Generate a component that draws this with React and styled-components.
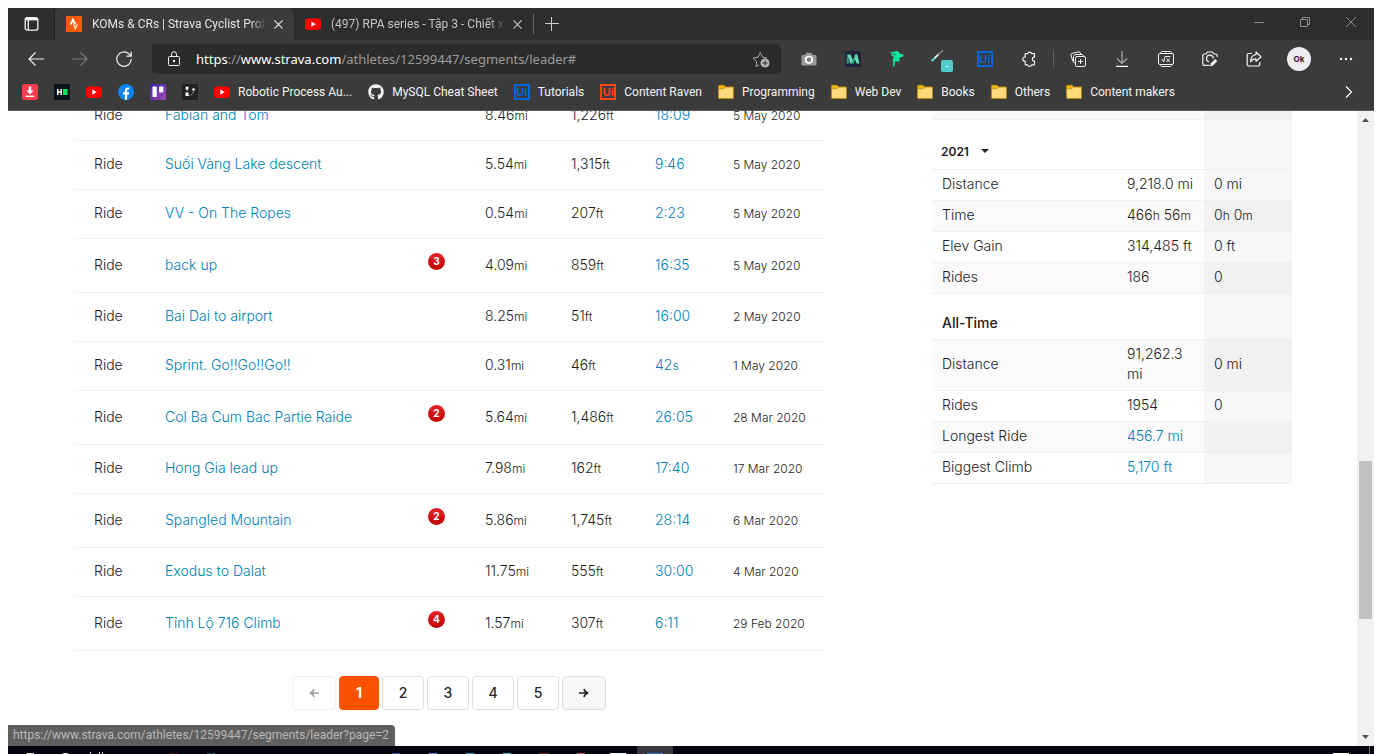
import React from "react";
import styled, { createGlobalStyle, css } from "styled-components";
import { FaGithub } from "react-icons/fa";

const GlobalStyle = createGlobalStyle`
  *, *::before, *::after { box-sizing: border-box; }
  body {
    margin: 8px 8px 0;
    background: #fff;
    font-family: Inter, "Noto Sans", sans-serif;
    overflow: hidden;
  }
  button { font: inherit; color: inherit; border: 0; padding: 0; background: none; cursor: pointer; }
  a { text-decoration: none; }
  svg { display: block; flex: none; }
`;

const chromeFont = css`
  font-family: Roboto, "Noto Sans", sans-serif;
  font-size: 12px;
`;

const Desktop = styled.div`
  display: flex;
  flex-direction: column;
  height: calc(100vh - 8px);
`;

/* ---------- title bar ---------- */

const TitleBar = styled.header`
  ${chromeFont}
  display: flex;
  align-items: stretch;
  flex: none;
  height: 32px;
  background: #2d2d2d;
  color: #d0d0d0;
`;

const TabActions = styled.button`
  display: flex;
  align-items: center;
  justify-content: center;
  width: 47px;
  border-right: 1px solid #222;
  color: #f2f2f2;
`;

const Tab = styled.div`
  display: flex;
  align-items: center;
  gap: 10px;
  width: 239px;
  padding: 0 8px 0 11px;
  border-radius: 5px 5px 0 0;
  background: ${(p) => (p.$active ? "#3b3b3b" : "transparent")};
  color: ${(p) => (p.$active ? "#e4e4e4" : "#c4c4c4")};
`;

const TabTitle = styled.span`
  flex: 1;
  min-width: 0;
  overflow: hidden;
  white-space: nowrap;
  mask-image: linear-gradient(to right, #000 calc(100% - 16px), transparent);
`;

const TabClose = styled.button`
  display: flex;
  align-items: center;
  justify-content: center;
  width: 16px;
  height: 16px;
  margin-left: -6px;
`;

const TabDivider = styled.span`
  align-self: center;
  width: 1px;
  height: 20px;
  background: #6a6a6a;
`;

const NewTab = styled.button`
  display: flex;
  align-items: center;
  justify-content: center;
  width: 36px;
`;

const WindowControls = styled.div`
  display: flex;
  align-items: stretch;
  margin-left: auto;
  padding-bottom: 4px;
  color: #8c8c8c;
`;

const WindowButton = styled.button`
  display: flex;
  align-items: center;
  justify-content: center;
  width: 46px;
`;

/* ---------- toolbar ---------- */

const Toolbar = styled.div`
  ${chromeFont}
  display: flex;
  align-items: center;
  flex: none;
  height: 38px;
  padding: 0 4px 0 6px;
  background: #3b3b3b;
  color: #f2f2f2;
`;

const ToolButton = styled.button`
  display: flex;
  align-items: center;
  justify-content: center;
  flex: none;
  width: ${(p) => p.$width || 44}px;
  height: 30px;
  color: ${(p) => (p.$dim ? "#7d7d7d" : "inherit")};
`;

const AddressBar = styled.div`
  display: flex;
  align-items: center;
  flex: 1;
  min-width: 0;
  height: 30px;
  margin: 0 6px;
  padding: 0 10px 0 14px;
  border-radius: 4px;
  background: #2b2b2b;
`;

const Url = styled.span`
  flex: 1;
  min-width: 0;
  overflow: hidden;
  margin-left: 14px;
  white-space: nowrap;
  font-family: "Noto Sans", sans-serif;
  font-size: 13px;
  line-height: 20px;
  color: #9b9b9b;
  b { font-weight: 400; color: #fff; }
`;

const ToolDivider = styled.span`
  width: 1px;
  height: 18px;
  margin: 0 2px;
  background: #5c5c5c;
`;

const Avatar = styled.span`
  display: flex;
  align-items: center;
  justify-content: center;
  width: 24px;
  height: 24px;
  border-radius: 50%;
  background: #f0eef3;
  color: #222;
  font: 700 8px Inter, sans-serif;
`;

/* ---------- bookmarks ---------- */

const Bookmarks = styled.nav`
  ${chromeFont}
  display: flex;
  align-items: center;
  gap: 16px;
  flex: none;
  height: 33px;
  padding: 0 20px 5px 14px;
  border-bottom: 1px solid #5c5a5c;
  background: #3b3b3b;
  color: #f4f4f4;
`;

const Bookmark = styled.a`
  display: flex;
  align-items: center;
  gap: 8px;
  height: 16px;
  color: inherit;
  white-space: nowrap;
`;

const MoreBookmarks = styled.button`
  margin-left: auto;
`;

/* ---------- page ---------- */

const Viewport = styled.div`
  position: relative;
  display: flex;
  flex: 1;
  min-height: 0;
  overflow: hidden;
  color: #1c1c20;
  font-size: 14px;
  font-weight: 300;
`;

/* The page is scrolled part of the way down, so its first row is cut. */
const Page = styled.main`
  display: flex;
  justify-content: space-between;
  align-items: flex-start;
  flex: 1;
  min-width: 0;
  margin-top: -20px;
  padding: 0 65px 0 66px;
`;

const Results = styled.section`
  flex: 0 1 750px;
  min-width: 0;
`;

const SegmentTable = styled.table`
  width: 100%;
  border-collapse: collapse;
  table-layout: fixed;
`;

const SegmentRow = styled.tr`
  height: ${(p) => (p.$ranked ? 54 : 49)}px;
  border-bottom: 1px solid #f0f0f5;
`;

const Cell = styled.td`
  padding: 0 0 1px ${(p) => (p.$first ? 20 : 0)}px;
  line-height: 20px;
  white-space: nowrap;
  vertical-align: middle;
`;

const DateCell = styled(Cell)`
  padding-top: 2px;
  font-size: 12px;
`;

const Unit = styled.small`
  font-size: 12px;
  line-height: 1;
`;

const Link = styled.a`
  color: #007fb6;
`;

const Rank = styled.span`
  display: flex;
  align-items: center;
  justify-content: center;
  width: 17px;
  height: 17px;
  margin-bottom: 7px;
  border-radius: 50%;
  background: linear-gradient(#e8262b, #bd0000);
  color: #fff;
  font-size: 10px;
  font-weight: 700;
  line-height: 16px;
`;

const Pagination = styled.nav`
  display: flex;
  justify-content: center;
  gap: 3px;
  margin-top: 25px;
`;

const PageButton = styled.button`
  display: flex;
  align-items: center;
  justify-content: center;
  width: ${(p) => (p.$arrow ? 44 : p.$current ? 40 : 42)}px;
  height: 34px;
  border: 1px solid ${(p) => (p.$current ? "#fc5200" : "#dfdfe8")};
  border-radius: 4px;
  background: ${(p) => (p.$current ? "#fc5200" : p.$hover ? "#f7f7fa" : "#fff")};
  color: ${(p) => (p.$current ? "#fff" : "#242428")};
  font-weight: ${(p) => (p.$current ? 700 : 500)};
  &:disabled { border-color: #f0f0f5; color: #9c9c9f; cursor: default; }
`;

const Stats = styled.aside`
  flex: 0 0 360px;
`;

const StatTable = styled.table`
  width: 100%;
  border-collapse: collapse;
  table-layout: fixed;
`;

const StatRow = styled.tr`
  height: ${(p) => p.$height || 31}px;
  border-bottom: 1px solid #efeff1;
  background: ${(p) => (p.$striped ? "#fafafa" : "#fff")};
  & > :last-child { background: ${(p) => (p.$striped ? "#f1f1f1" : "#f7f7f7")}; }
`;

const StatCell = styled.td`
  padding: 4px 0 6px 10px;
  line-height: 20px;
  text-align: left;
  font-weight: 300;
`;

const YearCell = styled.th`
  padding: 14px 0 0 9px;
  text-align: left;
`;

const YearButton = styled.button`
  display: flex;
  align-items: center;
  gap: 12px;
  font-size: 12px;
  font-weight: 600;
`;

const SectionCell = styled.th`
  padding: 13px 0 0 10px;
  text-align: left;
  font-weight: 500;
`;

const StatusBubble = styled.div`
  ${chromeFont}
  position: absolute;
  left: 0;
  bottom: 0;
  height: 21px;
  padding: 0 6px 0 5px;
  border-top-right-radius: 4px;
  background: #5f5f5f;
  color: #b8b8b8;
  font-weight: 400;
  line-height: 21px;
`;

const ScrollTrack = styled.div`
  display: flex;
  flex-direction: column;
  align-items: center;
  flex: none;
  width: 17px;
  padding: 7px 0;
  background: #f1f1f1;
`;

const ScrollSpace = styled.span`
  flex: ${(p) => p.$grow};
`;

const ScrollThumb = styled.span`
  width: 13px;
  height: 158px;
  background: #c1c1c1;
`;

/* ---------- task bar ---------- */

const TaskBar = styled.footer`
  display: flex;
  gap: 1px;
  flex: none;
  height: 8px;
  overflow: hidden;
  background: #02020e;
`;

const TaskLead = styled.div`
  width: 147px;
  padding-left: 18px;
`;

const TaskItem = styled.span`
  display: flex;
  justify-content: center;
  width: 36px;
  height: 8px;
  padding-top: 7px;
  background: ${(p) => (p.$active ? "#38363f" : "transparent")};
`;

const TaskTray = styled.div`
  display: flex;
  gap: 20px;
  margin-left: auto;
  padding-right: 4px;
`;

/* ---------- drawings ---------- */

const Line = ({ size = 16, box = 16, w = 1, children, ...rest }) => (
  <svg width={size} height={size} viewBox={`0 0 ${box} ${box}`} fill="none" stroke="currentColor" strokeWidth={w} aria-hidden="true" {...rest}>
    {children}
  </svg>
);

const YouTube = () => (
  <svg width="16" height="16" viewBox="0 0 16 16" aria-hidden="true">
    <rect x="0" y="2.5" width="16" height="11.5" rx="3" fill="#f00" />
    <path d="M6.3 5.6v5.2l4.5-2.6z" fill="#fff" />
  </svg>
);

const Strava = () => (
  <svg width="16" height="16" viewBox="0 0 16 16" aria-hidden="true">
    <rect width="16" height="16" fill="#fc5a0a" />
    <path d="M7 1.7 3.6 8.6h2L7 5.9l1.4 2.7h2z" fill="#fff" />
    <path d="M8.4 8.6 9.4 10.6l1-2h1.8L9.4 14.2 6.7 8.6z" fill="#ffd3bd" />
  </svg>
);

const UiFrame = styled.span`
  display: flex;
  align-items: center;
  justify-content: center;
  width: 16px;
  height: 16px;
  border: 2px solid ${(p) => p.$color};
  color: ${(p) => p.$color};
  font: 700 11px/12px "Liberation Sans", sans-serif;
`;
const UiLogo = ({ color }) => <UiFrame $color={color}>Ui</UiFrame>;

const Folder = () => (
  <svg width="16" height="16" viewBox="0 0 16 16" aria-hidden="true">
    <path d="M.5 2A.8.8 0 0 1 1.3 1.3H6L7.5 3H15a.6.6 0 0 1 .6.6v10.2a.8.8 0 0 1-.8.8H1.3a.8.8 0 0 1-.8-.8z" fill="#ffd97a" stroke="#b8860b" />
    <path d="M1 1.8h4.8L7 3.2 5.8 4.5H1z" fill="#f0b400" />
    <path d="M.8 4.7h5.2l1.5-1.6" fill="none" stroke="#b8860b" strokeWidth=".8" />
  </svg>
);

const Downloader = () => (
  <svg width="16" height="16" viewBox="0 0 16 16" aria-hidden="true">
    <rect width="16" height="16" rx="2.5" fill="#fb3d4e" />
    <path d="M6.8 2.5h2.4v4h2.5L8 10.4 4.3 6.5h2.5z" fill="#fff" />
    <path d="M3.8 12.3h8.4" stroke="#fff" strokeWidth="1.4" />
  </svg>
);

const HackerRank = () => (
  <svg width="16" height="16" viewBox="0 0 16 16" aria-hidden="true">
    <rect width="16" height="16" fill="#0a141c" />
    <path d="M3.8 5v6M7.2 5v6M3.8 8h3.4" stroke="#fff" strokeWidth="1.5" />
    <rect x="9" y="5" width="4.5" height="6" fill="#00e35b" />
  </svg>
);

const Facebook = () => (
  <svg width="16" height="16" viewBox="0 0 16 16" aria-hidden="true">
    <circle cx="8" cy="8" r="8" fill="#0c86f5" />
    <path d="M6.9 15.8v-5.4H5V8.2h1.9V6.5c0-2 1.1-3 2.9-3 .8 0 1.5.1 1.5.1v1.9h-1c-.9 0-1.2.6-1.2 1.1v1.6h2.1l-.4 2.2H9.1v5.4a8 8 0 0 1-2.2 0z" fill="#fff" />
  </svg>
);

const Trello = () => (
  <svg width="16" height="16" viewBox="0 0 16 16" aria-hidden="true">
    <defs>
      <linearGradient id="board" x1="0" y1="0" x2="1" y2="1">
        <stop offset="0" stopColor="#3c22a8" />
        <stop offset="1" stopColor="#9d4bb0" />
      </linearGradient>
    </defs>
    <rect width="16" height="16" rx="1" fill="url(#board)" />
    <rect x="2.5" y="2.5" width="4.3" height="10.5" rx=".8" fill="#fff" />
    <rect x="9" y="2.5" width="4.3" height="6" rx=".8" fill="#fff" />
  </svg>
);

const Branches = () => (
  <svg width="16" height="16" viewBox="0 0 16 16" aria-hidden="true">
    <rect width="16" height="16" rx="1" fill="#212121" />
    <path d="M5 5v6M5.5 11.5c4 0 6-1.500 6-5" stroke="#aaa" strokeWidth="1" fill="none" strokeDasharray="2 1" />
    <rect x="3.700" y="2.700" width="2.800" height="2.800" fill="#fff" />
    <rect x="3.500" y="8.500" width="3" height="3.500" fill="#fff" />
    <circle cx="11.500" cy="5.500" r="1.300" fill="#fff" />
  </svg>
);

const Extensions = {
  camera: (
    <svg width="16" height="16" viewBox="0 0 16 16" aria-hidden="true">
      <path d="M1.500 4H4l1.500-2.200h5L12 4h2.500a1 1 0 0 1 1 1v8.500a1 1 0 0 1-1 1h-13a1 1 0 0 1-1-1V5a1 1 0 0 1 1-1z" fill="#9a9a9a" />
      <circle cx="8" cy="8.700" r="3.200" fill="#808080" stroke="#fff" strokeWidth="1.700" />
    </svg>
  ),
  mark: (
    <svg width="16" height="16" viewBox="0 0 16 16" aria-hidden="true">
      <rect width="16" height="16" fill="#20243a" />
      <path d="M2 3.500h3.500l2.500 6-1 3H5.500z" fill="#62dcb0" />
      <path d="M8 9.500 9.500 3.500h1.800L8.800 12.500H6.500z" fill="#2f9f83" />
      <path d="M10.500 3.500h1.800l2.200 9h-3L9.800 8z" fill="#62dcb0" />
      <path d="M2 3.500 4.500 12.500H1.500z" fill="#2f9f83" />
    </svg>
  ),
  bird: (
    <svg width="16" height="16" viewBox="0 0 16 16" aria-hidden="true">
      <path d="M1 1.800 4.500.8 8 0l2.500 1.500.7 1.500 3.300.2-.5 2.600-3 .6-.7 1.200.4 2.500-1.800.6-2.400-1L6 12l-.8 3.500H3.800l.4-4L3.500 9 5 5.800 2 5l1.500-1.500z" fill="#12e3a0" />
      <path d="M3.500 2.800 7 4" stroke="#2a4a3e" strokeWidth=".7" />
    </svg>
  ),
  puzzle: (
    <Line w={1.200}>
      <path d="M4.200 2.700h2.500a2 2 0 0 1 3.900 0h2.900v3.500h-.6a2 2 0 0 0 0 3.900h.6v3.700h-2.900a2 2 0 0 1-3.900 0H4.200v-3.700a2 2 0 1 1 0-3.900z" strokeLinejoin="round" />
    </Line>
  ),
};

const PickerIcon = () => (
  <svg width="24" height="26" viewBox="0 0 24 26" aria-hidden="true">
    <path d="M2 14.500 9 7.500l1.300 1.300-6.800 6.800z" fill="#e8f4f4" />
    <path d="M2 14.500 5 11.500l1.500 1.300-3 2.800z" fill="#4cc9c9" />
    <path d="M9 8.500l5-4" stroke="#777" strokeWidth="2" />
    <rect x="12" y="14" width="12" height="12" rx="2" fill="#4fcbcb" />
    <path d="M16.500 20.500h3" stroke="#e9ffff" />
  </svg>
);

const CloseMark = ({ size = 9 }) => (
  <Line size={size} box={10} w={1.300}>
    <path d="M.5.5l9 9M9.500.5l-9 9" />
  </Line>
);

/* ---------- data ---------- */

const siteMarks = [
  ["Downloader", Downloader],
  ["HackerRank", HackerRank],
  ["YouTube", YouTube],
  ["Facebook", Facebook],
  ["Trello", Trello],
  ["Branches", Branches],
];

const namedMarks = [
  ["Robotic Process Au...", <YouTube />],
  ["MySQL Cheat Sheet", <FaGithub size={16} />],
  ["Tutorials", <UiLogo color="#0067df" />],
  ["Content Raven", <UiLogo color="#fa4616" />],
  ["Programming", <Folder />],
  ["Web Dev", <Folder />],
  ["Books", <Folder />],
  ["Others", <Folder />],
  ["Content makers", <Folder />],
];

const segments = [
  ["Fabian and Tom", 0, "8.46", "1,226", "18:09", "5 May 2020"],
  ["Suối Vàng Lake descent", 0, "5.54", "1,315", "9:46", "5 May 2020"],
  ["VV - On The Ropes", 0, "0.54", "207", "2:23", "5 May 2020"],
  ["back up", 3, "4.09", "859", "16:35", "5 May 2020"],
  ["Bai Dai to airport", 0, "8.25", "51", "16:00", "2 May 2020"],
  ["Sprint. Go!!Go!!Go!!", 0, "0.31", "46", "42s", "1 May 2020"],
  ["Col Ba Cum Bac Partie Raide", 2, "5.64", "1,486", "26:05", "28 Mar 2020"],
  ["Hong Gia lead up", 0, "7.98", "162", "17:40", "17 Mar 2020"],
  ["Spangled Mountain", 2, "5.86", "1,745", "28:14", "6 Mar 2020"],
  ["Exodus to Dalat", 0, "11.75", "555", "30:00", "4 Mar 2020"],
  ["Tỉnh Lộ 716 Climb", 4, "1.57", "307", "6:11", "29 Feb 2020"],
];

const yearStats = [
  ["Distance", "9,218.0 mi", "0 mi"],
  ["Time", <>466<Unit>h</Unit> 56<Unit>m</Unit></>, <>0<Unit>h</Unit> 0<Unit>m</Unit></>],
  ["Elev Gain", "314,485 ft", "0 ft"],
  ["Rides", "186", "0"],
];

const allTimeStats = [
  ["Distance", <>91,262.3<br />mi</>, "0 mi"],
  ["Rides", "1954", "0"],
  ["Longest Ride", <Link href="#longest">456.7 mi</Link>, ""],
  ["Biggest Climb", <Link href="#climb">5,170 ft</Link>, ""],
];

const taskTips = ["#3a1520", "#0f4654", null, null, null, null, "#1d5fb0", "#5b8fe6", "#1f9fd0", "#41c5c5", "#8a1c38", "#d0476b", "#e9f2fa", "#2a7bd6"];

const StatRows = ({ rows, offset }) =>
  rows.map(([label, mine, yours], i) => (
    <StatRow key={label} $striped={(i + offset) % 2 === 1}>
      <StatCell as="th" scope="row">{label}</StatCell>
      <StatCell>{mine}</StatCell>
      <StatCell>{yours}</StatCell>
    </StatRow>
  ));

export default function App() {
  return (
    <Desktop>
      <GlobalStyle />
      <TitleBar>
        <TabActions aria-label="Tab actions">
          <Line w={1.300}>
            <rect x="2.200" y="1.700" width="12.600" height="12.500" rx="2" />
            <path d="M5.300 4v10" />
            <path d="M2.700 3.200h11.600" strokeWidth="2.400" />
          </Line>
        </TabActions>
        <Tab $active>
          <Strava />
          <TabTitle>KOMs &amp; CRs | Strava Cyclist Profile</TabTitle>
          <TabClose aria-label="Close tab"><CloseMark /></TabClose>
        </Tab>
        <Tab>
          <YouTube />
          <TabTitle>(497) RPA series - Tập 3 - Chiết xuất</TabTitle>
          <TabClose aria-label="Close tab"><CloseMark /></TabClose>
        </Tab>
        <TabDivider />
        <NewTab aria-label="New tab">
          <Line size={14} box={14}><path d="M6.500 0v14M0 6.500h14" /></Line>
        </NewTab>
        <WindowControls>
          <WindowButton aria-label="Minimize"><Line size={10} box={10}><path d="M0 5.500h10" /></Line></WindowButton>
          <WindowButton aria-label="Restore"><Line size={10} box={10}><path d="M.5 2.500h7v7h-7zM2.500 2.500v-2h7v7h-2" /></Line></WindowButton>
          <WindowButton aria-label="Close"><Line size={10} box={10}><path d="M0 0l10 10M10 0L0 10" /></Line></WindowButton>
        </WindowControls>
      </TitleBar>

      <Toolbar>
        <ToolButton aria-label="Back"><Line w={1.200}><path d="M16 8H1M7.500 1.500 1 8l6.500 6.500" /></Line></ToolButton>
        <ToolButton aria-label="Forward" $dim><Line w={1.200}><path d="M0 8h15M8.500 1.500 15 8l-6.500 6.500" /></Line></ToolButton>
        <ToolButton aria-label="Reload"><Line w={1.200}><path d="M15.200 8A7.200 7.200 0 1 1 12.800 2.700L15 4.900M15.200.5v4.700h-4.700" /></Line></ToolButton>
        <AddressBar>
          <Line><rect x="2.500" y="5.500" width="11" height="9" rx="1" /><path d="M5.500 5V3.200a2.500 2.500 0 0 1 5 0V5" /><rect x="7.500" y="9.500" width="1" height="1" /></Line>
          <Url><b>https</b>://<b>www.strava.com</b>/athletes/12599447/segments/leader#</Url>
          <ToolButton aria-label="Add to favorites" $width={20}>
            <Line size={18} box={18} color="#a8a8a8">
              <path d="M7 15 4 16.500l.7-5L1 8l5-.8L8.300 2.500 10.600 7.200l4.400.8" />
              <circle cx="13" cy="13" r="4.500" fill="#b5b5b5" stroke="none" />
              <path d="M10.500 13h5M13 10.500v5" stroke="#2b2b2b" />
            </Line>
          </ToolButton>
        </AddressBar>
        <ToolButton aria-label="Capture">{Extensions.camera}</ToolButton>
        <ToolButton aria-label="Markdown">{Extensions.mark}</ToolButton>
        <ToolButton aria-label="Bird">{Extensions.bird}</ToolButton>
        <ToolButton aria-label="Color picker"><PickerIcon /></ToolButton>
        <ToolButton aria-label="UiPath"><UiLogo color="#0067df" /></ToolButton>
        <ToolButton aria-label="Extensions">{Extensions.puzzle}</ToolButton>
        <ToolDivider />
        <ToolButton aria-label="Collections">
          <Line>
            <path d="M4 10.500H3L.8 4l.7-1.400L9 .8l1.300.8.7 1.900" />
            <path d="M5 12.500 3.500 11V5.500L5 3.500h7.500l1.500 2" />
            <rect x="5.500" y="5.500" width="10" height="10" rx="1.500" />
            <path d="M10.500 8v5M8 10.500h5" />
          </Line>
        </ToolButton>
        <ToolButton aria-label="Downloads"><Line w={1.200}><path d="M8 0v12M3 7.500l5 5 5-5" stroke="#aaa" /><path d="M2 15.400h12" stroke="#fff" /></Line></ToolButton>
        <ToolButton aria-label="Math solver">
          <Line>
            <rect x=".5" y="2.500" width="15" height="11" rx="1.500" />
            <path d="M2.500 2.500V1.500l1-1h9l1 1v1M2.500 13.500v1l1 1h9l1-1v-1M3.500 8.500l1 .2L5.700 11 7 5.500h5.500M8.500 7.500l3.200 3.500M11.700 7.500 8.500 11" />
          </Line>
        </ToolButton>
        <ToolButton aria-label="Web capture">
          <Line w={1.200}>
            <path d="M7.500 14.400H2.300A1.500 1.500 0 0 1 .8 12.900V4.500A1.500 1.500 0 0 1 2.300 3H4l1.500-2h5L12 3h1.700a1.500 1.500 0 0 1 1.500 1.500V6M7 10.800a3.400 3.400 0 1 1 4.300-3.300" />
            <path d="M8 15.500l1-3.300 4.200-4.300 2 2-4.200 4.500z" fill="#fff" stroke="none" />
          </Line>
        </ToolButton>
        <ToolButton aria-label="Share">
          <Line w={1.200}>
            <path d="M6 2.500H3a1.800 1.800 0 0 0-1.800 1.800v8.900A1.800 1.800 0 0 0 3 15h9a1.800 1.800 0 0 0 1.800-1.800V11" />
            <path d="M10 1l5 4.800-5 4.600V7.800c-2.800 0-4.300 1-5.500 3C4.700 7 6.500 4 10 3.700z" strokeLinejoin="round" />
          </Line>
        </ToolButton>
        <ToolButton aria-label="Profile" $width={46}><Avatar>Ok</Avatar></ToolButton>
        <ToolButton aria-label="Settings and more" $width={48}>
          <svg width="14" height="4" viewBox="0 0 14 4" fill="currentColor" aria-hidden="true"><circle cx="2" cy="2" r="1.200" /><circle cx="7" cy="2" r="1.200" /><circle cx="12" cy="2" r="1.200" /></svg>
        </ToolButton>
      </Toolbar>

      <Bookmarks aria-label="Favorites">
        {siteMarks.map(([name, Icon]) => (
          <Bookmark key={name} href="#" aria-label={name}><Icon /></Bookmark>
        ))}
        {namedMarks.map(([name, icon]) => (
          <Bookmark key={name} href="#">{icon}{name}</Bookmark>
        ))}
        <MoreBookmarks aria-label="More favorites">
          <Line size={12} box={12} w={1.300}><path d="M4 .5 9.500 6 4 11.500" /></Line>
        </MoreBookmarks>
      </Bookmarks>

      <Viewport>
        <Page>
          <Results>
            <SegmentTable aria-label="Segments">
              <colgroup>
                <col width="91" />
                <col />
                <col width="57" />
                <col width="86" />
                <col width="84" />
                <col width="78" />
                <col width="91" />
              </colgroup>
              <tbody>
                {segments.map(([name, rank, miles, feet, time, date]) => (
                  <SegmentRow key={name} $ranked={rank > 0}>
                    <Cell $first>Ride</Cell>
                    <Cell><Link href="#segment">{name}</Link></Cell>
                    <Cell>{rank > 0 && <Rank>{rank}</Rank>}</Cell>
                    <Cell>{miles}<Unit>mi</Unit></Cell>
                    <Cell>{feet}<Unit>ft</Unit></Cell>
                    <Cell>
                      <Link href="#effort">
                        {time.endsWith("s") ? <>{time.slice(0, -1)}<Unit>s</Unit></> : time}
                      </Link>
                    </Cell>
                    <DateCell>{date}</DateCell>
                  </SegmentRow>
                ))}
              </tbody>
            </SegmentTable>
            <Pagination aria-label="Pages">
              <PageButton $arrow disabled aria-label="Previous page">
                <Line size={10} box={10} w={1.400}><path d="M10 5H1.500M5 1C4.500 3 3 4.500 1 5c2 .5 3.500 2 4 4" /></Line>
              </PageButton>
              <PageButton $current aria-current="page">1</PageButton>
              <PageButton>2</PageButton>
              <PageButton>3</PageButton>
              <PageButton>4</PageButton>
              <PageButton>5</PageButton>
              <PageButton $arrow $hover aria-label="Next page">
                <Line size={10} box={10} w={1.600}><path d="M0 5h8.500M5 1c.5 2 2 3.500 4 4-2 .5-3.500 2-4 4" /></Line>
              </PageButton>
            </Pagination>
          </Results>

          <Stats>
            <StatTable aria-label="Ride totals">
              <colgroup>
                <col />
                <col width="87" />
                <col width="88" />
              </colgroup>
              <tbody>
                <StatRow $striped $height={28}>
                  <StatCell /><StatCell /><StatCell />
                </StatRow>
                <StatRow $height={50}>
                  <YearCell colSpan={2}>
                    <YearButton>
                      2021
                      <svg width="8" height="4" viewBox="0 0 8 4" aria-hidden="true"><path d="M0 0h8L4 4z" fill="#242428" /></svg>
                    </YearButton>
                  </YearCell>
                  <td />
                </StatRow>
                <StatRows rows={yearStats} offset={0} />
                <StatRow $height={46}>
                  <SectionCell colSpan={2}>All-Time</SectionCell>
                  <td />
                </StatRow>
                <StatRows rows={allTimeStats} offset={1} />
              </tbody>
            </StatTable>
          </Stats>
        </Page>
        <ScrollTrack>
          <svg width="7" height="4" viewBox="0 0 7 4" aria-hidden="true"><path d="M0 4h7L3.500 0z" fill="#505050" /></svg>
          <ScrollSpace $grow={338} />
          <ScrollThumb />
          <ScrollSpace $grow={116} />
          <svg width="7" height="4" viewBox="0 0 7 4" aria-hidden="true"><path d="M0 0h7L3.500 4z" fill="#505050" /></svg>
        </ScrollTrack>
        <StatusBubble>https://www.strava.com/athletes/12599447/segments/leader?page=2</StatusBubble>
      </Viewport>

      <TaskBar>
        <TaskLead>
          <svg width="90" height="8" viewBox="0 0 90 8" aria-hidden="true">
            <path d="M0 8l1-1h7v1zM36 8l2-1h3l2 1z" fill="#e4e4e8" />
            <path d="M64.500 6v2M73.500 6v2M76.500 6v2" stroke="#d8d8dc" />
          </svg>
        </TaskLead>
        {taskTips.map((color, i) => (
          <TaskItem key={i} $active={i === taskTips.length - 1}>
            {color && (
              <svg width="16" height="1" viewBox="0 0 16 1" aria-hidden="true">
                <rect x={i > 11 ? 0 : 4} width={i > 11 ? 16 : 8} height="1" fill={color} />
              </svg>
            )}
          </TaskItem>
        ))}
        <TaskTray>
          <svg width="16" height="8" viewBox="0 0 16 8" aria-hidden="true"><rect y="7" width="16" height="1" fill="#fff" /></svg>
          <svg width="1" height="8" viewBox="0 0 1 8" aria-hidden="true"><rect width="1" height="8" fill="#666671" /></svg>
        </TaskTray>
      </TaskBar>
    </Desktop>
  );
}
